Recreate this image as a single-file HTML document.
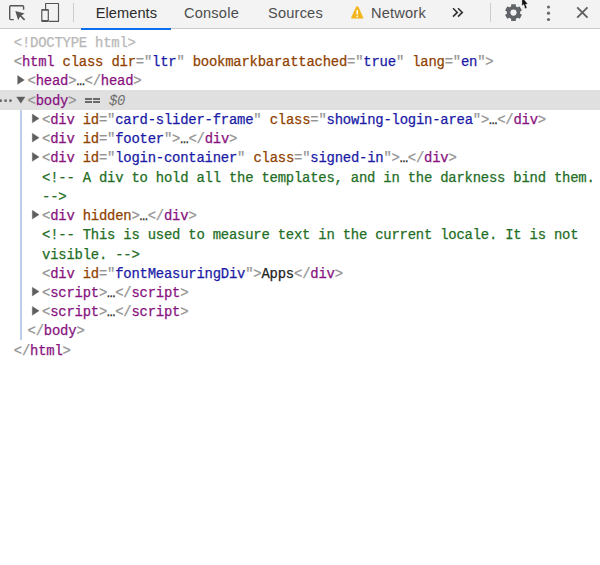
<!DOCTYPE html>
<html><head><meta charset="utf-8">
<style>
*{margin:0;padding:0;box-sizing:border-box}
html,body{width:600px;height:565px;overflow:hidden;background:#fff}
body{position:relative;font-family:"Liberation Sans",sans-serif}
#tb{position:absolute;left:0;top:0;width:600px;height:29px;background:#f3f3f3;border-bottom:1px solid #cbcbcb}
.tab{position:absolute;top:0;height:28px;font-size:14.6px;letter-spacing:0.2px;color:#4d4d4d;line-height:27.4px}
.sep{position:absolute;top:3px;width:1px;height:19px;background:#cdcdcd}
#ind{position:absolute;left:81px;top:28px;width:90px;height:2px;background:#0a6fee}
#tree{position:absolute;left:0;top:1.6px;-webkit-text-stroke:0.25px currentColor;width:600px;font-family:"Liberation Mono",monospace;font-size:13.9px;letter-spacing:-0.21px}
.ln{position:absolute;left:0;height:19.24px;line-height:19.24px;white-space:pre;color:#222}
.tg{color:#959595}
.tn{color:#881280}
.an{color:#904200}
.av{color:#1a1aa6}
.cm{color:#236e25}
.dt{color:#b8b8b8}
.tri{position:absolute;width:0;height:0;border-style:solid}
.tri.r{border-width:4.4px 0 4.4px 6.8px;border-color:transparent transparent transparent #6a6a6a}
.tri.d{border-width:6.4px 4.3px 0 4.3px;border-color:#6a6a6a transparent transparent transparent}
#sel{position:absolute;left:0;top:90px;width:600px;height:20px;background:#e0e0e0}
#vl{position:absolute;left:20px;top:110px;width:2px;height:230px;background:#bccde9}
.dot{position:absolute;width:2.6px;height:2.6px;background:#6a6a6a;border-radius:0.5px}
</style></head><body>
<div id="tb">
  <svg style="position:absolute;left:0;top:0" width="80" height="28" viewBox="0 0 80 28">
    <path d="M13.8 19.6H10.8Q9.7 19.6 9.7 18.5V6.8Q9.7 5.7 10.8 5.7H22.5Q23.6 5.7 23.6 6.8V9.7" fill="none" stroke="#555" stroke-width="1.4"/>
    <path d="M15.3 11 L24.6 13.6 L21.3 15.4 L25.2 19.3 L24 20.5 L20.1 16.6 L18.2 20.2 Z" fill="#555"/>
    <path d="M45.6 9.2V3.5H58.5V21.4H49" fill="none" stroke="#555" stroke-width="1.15" stroke-linejoin="round"/>
    <path fill="#555" fill-rule="evenodd" d="M41.2 10.1Q41.2 9.1 42.2 9.1H47.9Q48.9 9.1 48.9 10.1V21Q48.9 22 47.9 22H42.2Q41.2 22 41.2 21Z M42.4 10.7V20H47.7V10.7Z"/>
  </svg>
  <div class="sep" style="left:73px"></div>
  <div class="tab" style="left:95.8px;color:#2a2a2a;letter-spacing:0.05px">Elements</div>
  <div class="tab" style="left:184px">Console</div>
  <div class="tab" style="left:268px">Sources</div>
  <svg style="position:absolute;left:350px;top:5px" width="15" height="15" viewBox="0 0 15 15">
    <path d="M6.2 1.4 H8.3 L13.2 12.4 V13.6 H1.2 V12.4 Z" fill="#f2b51c"/>
    <rect x="6.5" y="5" width="1.5" height="4.5" fill="#fff"/>
    <rect x="6.5" y="10.7" width="1.5" height="1.5" fill="#fff"/>
  </svg>
  <div class="tab" style="left:371px">Network</div>
  <svg style="position:absolute;left:448px;top:4px" width="20" height="18" viewBox="0 0 20 18">
    <path d="M5 4.2 L9.3 8.4 L5 12.6" fill="none" stroke="#333" stroke-width="1.6"/>
    <path d="M10 4.2 L14.3 8.4 L10 12.6" fill="none" stroke="#333" stroke-width="1.6"/>
  </svg>
  <div class="sep" style="left:490px"></div>
  <svg style="position:absolute;left:503px;top:2px" width="22" height="22" viewBox="0 0 22 22">
    <g fill="#606367" transform="translate(10.5,10.6)">
      <circle r="6.7"/>
      <rect x="-2.35" y="-8.4" width="4.7" height="16.8" rx="0.5"/>
      <rect x="-2.35" y="-8.4" width="4.7" height="16.8" rx="0.5" transform="rotate(60)"/>
      <rect x="-2.35" y="-8.4" width="4.7" height="16.8" rx="0.5" transform="rotate(120)"/>
    </g>
    <circle cx="10.5" cy="10.6" r="3.1" fill="#f3f3f3"/>
  </svg>
  <svg style="position:absolute;left:544px;top:3px" width="9" height="20" viewBox="0 0 9 20">
    <circle cx="4.5" cy="4" r="1.6" fill="#6a6a6a"/><circle cx="4.5" cy="10.2" r="1.6" fill="#6a6a6a"/><circle cx="4.5" cy="16.5" r="1.6" fill="#6a6a6a"/>
  </svg>
  <svg style="position:absolute;left:574px;top:5px" width="16" height="16" viewBox="0 0 16 16">
    <path d="M3.2 2.4 L13.5 12.6 M13.5 2.4 L3.2 12.6" stroke="#5f5f5f" stroke-width="1.8"/>
  </svg>
  <svg style="position:absolute;left:510px;top:0" width="25" height="14" viewBox="510 0 25 14"><path d="M521.9 -3 L521.9 6.1 L523.8 4.6 L525 8.7 L527 8.1 L525.6 4.2 L527.9 4 Z" fill="#111" stroke="#fff" stroke-width="0.4" stroke-linejoin="round"/></svg>
</div>
<div id="ind"></div>
<div id="sel"></div>
<div id="vl"></div>
<svg style="position:absolute;left:0;top:96px" width="14" height="9" viewBox="0 0 14 9"><circle cx="0.7" cy="4.7" r="1.35" fill="#666"/><circle cx="5.6" cy="4.7" r="1.35" fill="#666"/><circle cx="10.5" cy="4.7" r="1.35" fill="#666"/></svg>
<div style="position:absolute;left:84.8px;top:98.3px;width:7.2px;height:1.7px;background:#6a6a6a"></div>
<div style="position:absolute;left:93px;top:98.3px;width:7.2px;height:1.7px;background:#6a6a6a"></div>
<div style="position:absolute;left:84.8px;top:101.2px;width:7.2px;height:1.7px;background:#6a6a6a"></div>
<div style="position:absolute;left:93px;top:101.2px;width:7.2px;height:1.7px;background:#6a6a6a"></div>
<svg style="position:absolute;left:0;top:0" width="60" height="340" viewBox="0 0 60 340"><g fill="#5e5e5e" stroke="#5e5e5e" stroke-width="0.35" stroke-linejoin="round"><path d="M17.6 75.56L24.4 79.96L17.6 84.36Z"/><path d="M32.3 114.04L39.1 118.44L32.3 122.84Z"/><path d="M32.3 133.28L39.1 137.68L32.3 142.08Z"/><path d="M32.3 152.52L39.1 156.92L32.3 161.32Z"/><path d="M32.3 210.24L39.1 214.64L32.3 219.04Z"/><path d="M32.3 287.20L39.1 291.60L32.3 296.00Z"/><path d="M32.3 306.44L39.1 310.84L32.3 315.24Z"/><path d="M16.6 96.9H25L20.8 103.3Z"/></g></svg>
<div id="tree">
<div class="ln" style="top:32.28px;left:13.8px"><span class="dt">&lt;!DOCTYPE html&gt;</span></div>
<div class="ln" style="top:51.52px;left:13.8px"><span class="tg">&lt;</span><span class="tn">html</span> <span class="an">class</span> <span class="an">dir</span><span class="tg">="</span><span class="av">ltr</span><span class="tg">"</span> <span class="an">bookmarkbarattached</span><span class="tg">="</span><span class="av">true</span><span class="tg">"</span> <span class="an">lang</span><span class="tg">="</span><span class="av">en</span><span class="tg">"&gt;</span></div>
<div class="ln" style="top:70.76px;left:27.6px"><span class="tg">&lt;</span><span class="tn">head</span><span class="tg">&gt;</span>…<span class="tg">&lt;/</span><span class="tn">head</span><span class="tg">&gt;</span></div>
<div class="ln" style="top:90px;left:27.6px"><span class="tg">&lt;</span><span class="tn">body</span><span class="tg">&gt;</span>    <span style="color:#6e6e6e;font-style:italic;-webkit-text-stroke:0">$0</span></div>
<div class="ln" style="top:109.24px;left:42px"><span class="tg">&lt;</span><span class="tn">div</span> <span class="an">id</span><span class="tg">="</span><span class="av">card-slider-frame</span><span class="tg">"</span> <span class="an">class</span><span class="tg">="</span><span class="av">showing-login-area</span><span class="tg">"&gt;</span>…<span class="tg">&lt;/</span><span class="tn">div</span><span class="tg">&gt;</span></div>
<div class="ln" style="top:128.48px;left:42px"><span class="tg">&lt;</span><span class="tn">div</span> <span class="an">id</span><span class="tg">="</span><span class="av">footer</span><span class="tg">"&gt;</span>…<span class="tg">&lt;/</span><span class="tn">div</span><span class="tg">&gt;</span></div>
<div class="ln" style="top:147.72px;left:42px"><span class="tg">&lt;</span><span class="tn">div</span> <span class="an">id</span><span class="tg">="</span><span class="av">login-container</span><span class="tg">"</span> <span class="an">class</span><span class="tg">="</span><span class="av">signed-in</span><span class="tg">"&gt;</span>…<span class="tg">&lt;/</span><span class="tn">div</span><span class="tg">&gt;</span></div>
<div class="ln" style="top:166.96px;left:42px"><span class="cm">&lt;!-- A div to hold all the templates, and in the darkness bind them.</span></div>
<div class="ln" style="top:186.2px;left:42px"><span class="cm">--&gt;</span></div>
<div class="ln" style="top:205.44px;left:42px"><span class="tg">&lt;</span><span class="tn">div</span> <span class="an">hidden</span><span class="tg">&gt;</span>…<span class="tg">&lt;/</span><span class="tn">div</span><span class="tg">&gt;</span></div>
<div class="ln" style="top:224.68px;left:42px"><span class="cm">&lt;!-- This is used to measure text in the current locale. It is not</span></div>
<div class="ln" style="top:243.92px;left:42px"><span class="cm">visible. --&gt;</span></div>
<div class="ln" style="top:263.16px;left:42px"><span class="tg">&lt;</span><span class="tn">div</span> <span class="an">id</span><span class="tg">="</span><span class="av">fontMeasuringDiv</span><span class="tg">"&gt;</span>Apps<span class="tg">&lt;/</span><span class="tn">div</span><span class="tg">&gt;</span></div>
<div class="ln" style="top:282.4px;left:42px"><span class="tg">&lt;</span><span class="tn">script</span><span class="tg">&gt;</span>…<span class="tg">&lt;/</span><span class="tn">script</span><span class="tg">&gt;</span></div>
<div class="ln" style="top:301.64px;left:42px"><span class="tg">&lt;</span><span class="tn">script</span><span class="tg">&gt;</span>…<span class="tg">&lt;/</span><span class="tn">script</span><span class="tg">&gt;</span></div>
<div class="ln" style="top:320.88px;left:27.6px"><span class="tg">&lt;/</span><span class="tn">body</span><span class="tg">&gt;</span></div>
<div class="ln" style="top:340.12px;left:13.8px"><span class="tg">&lt;/</span><span class="tn">html</span><span class="tg">&gt;</span></div>
</div>
</body></html>
